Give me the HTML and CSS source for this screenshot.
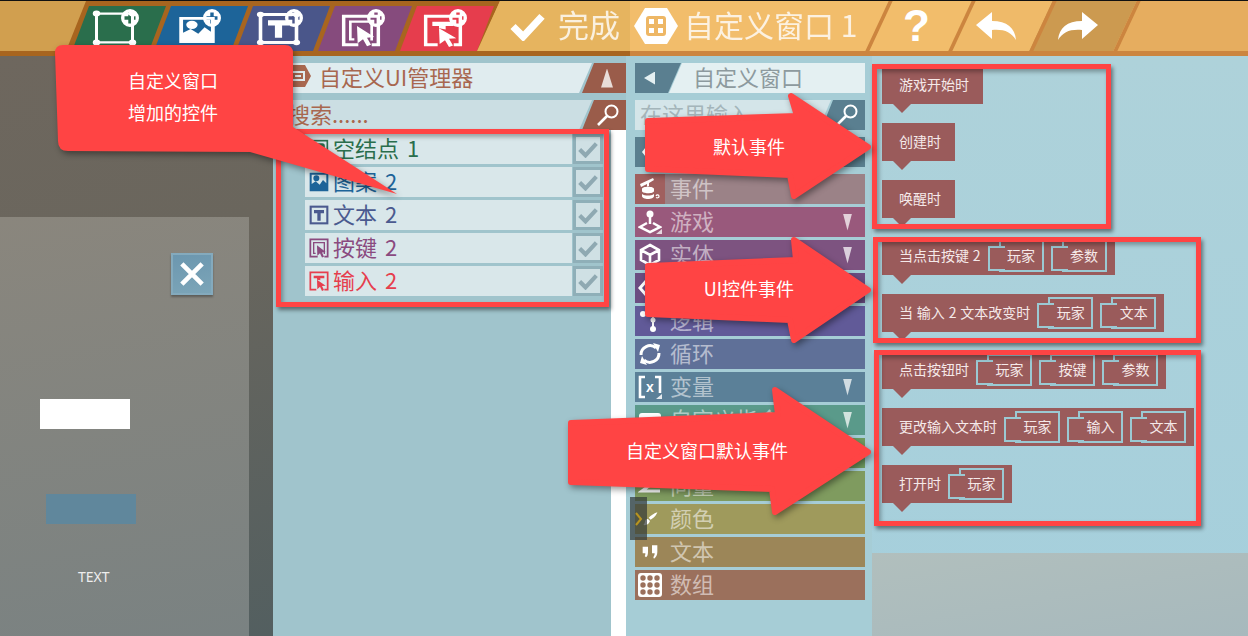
FILE: index.html
```html
<!DOCTYPE html>
<html lang="zh-CN">
<head>
    <meta charset="UTF-8">
    <meta name="viewport" content="width=device-width, initial-scale=1.0">
    <title>自定义窗口</title>
    <link rel="stylesheet" href="styles.css">
</head>
<body>
    <svg class="defs" width="0" height="0">
        <symbol id="i-plus" viewBox="0 0 18 18">
            <path fill="#fff" fill-rule="evenodd" d="M9 0a9 9 0 1 0 0 18A9 9 0 0 0 9 0zM7.3 3.5h3.4v3.8h3.800v3.400h-3.800v3.800H7.300v-3.800H3.500V7.300h3.800z"/>
        </symbol>
        <symbol id="i-node" viewBox="0 0 30 30" preserveAspectRatio="none">
            <path fill="none" stroke="currentColor" stroke-width="2" d="M3 3h24v24H3z"/>
            <circle cx="3" cy="3" r="2.500" fill="currentColor"/><circle cx="27" cy="3" r="2.500" fill="currentColor"/>
            <circle cx="3" cy="27" r="2.500" fill="currentColor"/><circle cx="27" cy="27" r="2.500" fill="currentColor"/>
        </symbol>
        <symbol id="i-image" viewBox="0 0 30 30" preserveAspectRatio="none">
            <path fill="currentColor" fill-rule="evenodd" d="M1 1h28v28H1zM4 4v14l6-4 6 5 5-7 5 5V4zM11 5a4.500 4.500 0 1 0 0 9 4.500 4.500 0 0 0 0-9z"/>
        </symbol>
        <symbol id="i-text" viewBox="0 0 30 30" preserveAspectRatio="none">
            <path fill="none" stroke="currentColor" stroke-width="2.400" d="M3 3h24v24H3z"/>
            <path fill="currentColor" d="M8 8h14v4.500h-4.600V23h-4.800V12.500H8z"/>
            <circle cx="3" cy="3" r="2.400" fill="currentColor"/><circle cx="27" cy="3" r="2.400" fill="currentColor"/>
            <circle cx="3" cy="27" r="2.400" fill="currentColor"/><circle cx="27" cy="27" r="2.400" fill="currentColor"/>
        </symbol>
        <symbol id="i-button" viewBox="0 0 30 30" preserveAspectRatio="none">
            <path fill="none" stroke="currentColor" stroke-width="2.600" d="M13 28H2V2h26v26h-5"/>
            <path fill="none" stroke="currentColor" stroke-width="2" d="M10 23H7V7h16v16h-1"/>
            <path fill="currentColor" d="M12 11l13 10-5.500.6 3 6.400-3 1.400-3-6.500-4 3.600z"/>
        </symbol>
        <symbol id="i-input" viewBox="0 0 30 30" preserveAspectRatio="none">
            <path fill="none" stroke="currentColor" stroke-width="2.600" d="M11 28H2V2h26v26h-5"/>
            <path fill="currentColor" d="M7 7h16v4h-6v3l-5-1v-2H7z"/>
            <path fill="currentColor" d="M12 13l13 9-5.500.6 3 6-3 1.400-3-6.200-4 3.400z"/>
        </symbol>
        <symbol id="i-lens" viewBox="0 0 24 24">
            <circle cx="15.500" cy="8.500" r="6" fill="none" stroke="currentColor" stroke-width="2"/>
            <path fill="none" stroke="currentColor" stroke-width="2.600" d="M11 13L2 22"/>
        </symbol>
        <symbol id="i-check" viewBox="0 0 24 20">
            <path fill="none" stroke="currentColor" stroke-width="5" d="M2 10l7 7L22 3"/>
        </symbol>
        <symbol id="i-redo" viewBox="0 0 40 28">
            <path fill="currentColor" d="M24 0l16 13-16 14v-9C12 17 5 20 0 28 1 16 9 9 24 9z"/>
        </symbol>
    </svg>

    <header class="topbar">
        <div class="topbar-row">
            <div class="topbar-fill"></div>
            <div class="tabs">
                <div class="tab tab-node">
                    <svg class="tab-icon"><use href="#i-node" x="0" y="1" width="45" height="36"/><use href="#i-plus" x="29" y="0" width="18" height="18"/></svg>
                </div>
                <div class="tab tab-image">
                    <svg class="tab-icon"><use href="#i-image" x="4" y="7" width="38" height="28"/><use href="#i-plus" x="29" y="0" width="18" height="18"/></svg>
                </div>
                <div class="tab tab-text">
                    <svg class="tab-icon"><use href="#i-text" x="0" y="2" width="45" height="35"/><use href="#i-plus" x="29" y="0" width="18" height="18"/></svg>
                </div>
                <div class="tab tab-button">
                    <svg class="tab-icon"><use href="#i-button" x="3" y="5" width="40" height="33"/><use href="#i-plus" x="29" y="0" width="18" height="18"/></svg>
                </div>
                <div class="tab tab-input">
                    <svg class="tab-icon"><use href="#i-input" x="3" y="5" width="40" height="33"/><use href="#i-plus" x="29" y="0" width="18" height="18"/></svg>
                </div>
            </div>
            <div class="done">
                <svg class="done-check" width="35" height="29"><use href="#i-check" width="35" height="29"/></svg>
                <span>完成</span>
            </div>
            <div class="doc-title">
                <svg class="doc-icon" width="44" height="36" viewBox="0 0 44 36">
                    <path fill="#fff" d="M11 0h22l11 18-11 18H11L0 18z"/>
                    <rect x="12" y="8" width="20" height="20" rx="3" fill="#eeb765"/>
                    <path fill="#fff" d="M15 11h5v5h-5zM24 11h5v5h-5zM15 20h5v5h-5zM24 20h5v5h-5z"/>
                </svg>
                <span>自定义窗口 1</span>
            </div>
            <div class="seg seg-help"><div class="seg-in help-mark">?</div></div>
            <div class="seg seg-undo">
                <div class="seg-in"><svg class="flip" width="40" height="28"><use href="#i-redo" width="40" height="28"/></svg></div>
            </div>
            <div class="seg seg-redo">
                <div class="seg-in"><svg width="40" height="28"><use href="#i-redo" width="40" height="28"/></svg></div>
            </div>
            <div class="seg seg-rest"></div>
        </div>
        <div class="topbar-rule"></div>
    </header>

    <main class="main">
        <section class="canvas">
            <div class="window">
                <div class="win-close">
                    <svg width="24" height="24" viewBox="0 0 26 26"><path stroke="#fff" stroke-width="5" d="M2 2l22 22M24 2L2 24"/></svg>
                </div>
                <div class="win-input"></div>
                <div class="win-button"></div>
                <div class="win-label">TEXT</div>
            </div>
        </section>

        <section class="manager">
            <div class="head">
                <div class="head-bar">
                    <svg width="26" height="22" viewBox="0 0 26 22"><path fill="#a8674f" d="M6 0h14l6 11-6 11H6L0 11z"/><path fill="none" stroke="#e0ecef" stroke-width="2" d="M7 7h12v8H7z"/><path stroke="#e0ecef" stroke-width="2" d="M10 11h6"/></svg>
                    <span>自定义UI管理器</span>
                </div>
                <div class="head-btn">
                    <div class="up-mark"></div>
                </div>
            </div>
            <div class="head">
                <div class="head-bar search-bar">搜索......</div>
                <div class="head-btn">
                    <svg class="lens" width="24" height="24"><use href="#i-lens" width="24" height="24"/></svg>
                </div>
            </div>
            <div class="list-wrap">
                <div class="list">
                    <div class="row">
                        <div class="row-bar c-node"><svg viewBox="0 0 24 24"><rect x="2" y="2" width="20" height="20" fill="none" stroke="currentColor" stroke-width="2"/><rect x="5" y="5" width="14" height="14" rx="3" fill="currentColor"/></svg><span>空结点 1</span></div>
                        <div class="tick"><svg width="20" height="17"><use href="#i-check" width="20" height="17"/></svg></div>
                    </div>
                    <div class="row">
                        <div class="row-bar c-image"><svg viewBox="0 0 24 24"><use href="#i-image" width="24" height="24"/></svg><span>图案 2</span></div>
                        <div class="tick"><svg width="20" height="17"><use href="#i-check" width="20" height="17"/></svg></div>
                    </div>
                    <div class="row">
                        <div class="row-bar c-text"><svg viewBox="0 0 24 24"><rect x="2" y="2" width="20" height="20" fill="none" stroke="currentColor" stroke-width="2.500"/><path fill="currentColor" d="M6 6h12v4h-4v9h-4v-9H6z"/></svg><span>文本 2</span></div>
                        <div class="tick"><svg width="20" height="17"><use href="#i-check" width="20" height="17"/></svg></div>
                    </div>
                    <div class="row">
                        <div class="row-bar c-button"><svg viewBox="0 0 24 24"><use href="#i-button" width="24" height="24"/></svg><span>按键 2</span></div>
                        <div class="tick"><svg width="20" height="17"><use href="#i-check" width="20" height="17"/></svg></div>
                    </div>
                    <div class="row">
                        <div class="row-bar c-input"><svg viewBox="0 0 24 24"><use href="#i-input" width="24" height="24"/></svg><span>输入 2</span></div>
                        <div class="tick"><svg width="20" height="17"><use href="#i-check" width="20" height="17"/></svg></div>
                    </div>
                </div>
                <div class="gutter"></div>
            </div>
        </section>

        <section class="palette">
            <div class="head head-pal">
                <div class="back-btn"><div class="back-mark"></div></div>
                <div class="head-bar pal-title">自定义窗口</div>
            </div>
            <div class="head head-pal">
                <div class="head-bar pal-search">在这里输入</div>
                <div class="head-btn pal-lens">
                    <svg class="lens" width="24" height="24"><use href="#i-lens" width="24" height="24"/></svg>
                </div>
            </div>
            <div class="pal-tab">
                <svg width="14" height="20" viewBox="0 0 14 20"><path fill="#fff" d="M8 1l5 9-5 9-7-9z"/></svg>
            </div>
            <div class="pal-list">
                <div class="pal-row pal-event">
                    <div class="pal-icon pal-icon-on">
                        <svg width="24" height="24" viewBox="0 0 24 24"><path fill="#fff" d="M2 7l13-6 1 2L11 6v3l-2 .5V7L3 10zM4 12c0-3 12-3 12 0v2c0 3-12 3-12 0zM4 17c3 2 9 2 12 0v2c0 4-12 4-12 0z"/><path fill="none" stroke="#fff" stroke-width="1.200" d="M18 19c1-2 3-1 3 .5s-2 1.500-3 1"/></svg>
                    </div>
                    <span>事件</span>
                </div>
                <div class="pal-row pal-game">
                    <div class="pal-icon">
                        <svg width="24" height="24" viewBox="0 0 24 24"><circle cx="12" cy="4" r="3.500" fill="#fff"/><path stroke="#fff" stroke-width="2.500" d="M12 6v8"/><path fill="none" stroke="#fff" stroke-width="2.500" d="M9 13L2 17l10 5 10-5-7-4"/><path fill="#e6d8e0" d="M24 19v5h-6z"/></svg>
                    </div>
                    <span>游戏</span><i class="more"></i>
                </div>
                <div class="pal-row pal-entity">
                    <div class="pal-icon">
                        <svg width="24" height="24" viewBox="0 0 24 24"><path fill="none" stroke="#fff" stroke-width="2.600" d="M12 2l9 5v10l-9 5-9-5V7zM3 7l9 5 9-5M12 12v10"/></svg>
                    </div>
                    <span>实体</span><i class="more"></i>
                </div>
                <div class="pal-row pal-func">
                    <div class="pal-icon">
                        <svg width="24" height="24" viewBox="0 0 24 24"><path fill="none" stroke="#fff" stroke-width="3" d="M9 4l-7 8 7 8M15 4l7 8-7 8"/></svg>
                    </div>
                </div>
                <div class="pal-row pal-logic">
                    <div class="pal-icon">
                        <svg width="24" height="24" viewBox="0 0 24 24"><path fill="none" stroke="#fff" stroke-width="2" d="M5 5h7c2 0 3 1 3 3v11"/><circle cx="5" cy="5" r="3" fill="#fff"/><circle cx="15" cy="11" r="2.500" fill="#fff"/><circle cx="15" cy="20" r="3" fill="#fff"/></svg>
                    </div>
                    <span>逻辑</span>
                </div>
                <div class="pal-row pal-loop">
                    <div class="pal-icon">
                        <svg width="24" height="24" viewBox="0 0 24 24"><path fill="none" stroke="#fff" stroke-width="3" d="M3 13a9 9 0 0 1 15-7M21 11a9 9 0 0 1-15 7"/><path fill="#fff" d="M15 1l7 2-2 7zM9 23l-7-2 2-7z"/></svg>
                    </div>
                    <span>循环</span>
                </div>
                <div class="pal-row pal-var">
                    <div class="pal-icon">
                        <svg width="24" height="24" viewBox="0 0 24 24"><path fill="none" stroke="#fff" stroke-width="2.600" d="M7 2H2v20h5M17 2h5v16"/><text class="var-x" x="12" y="17" text-anchor="middle">x</text><path fill="#e4eaee" d="M24 19v5h-6z"/></svg>
                    </div>
                    <span>变量</span><i class="more"></i>
                </div>
                <div class="pal-row pal-custom">
                    <div class="pal-icon">
                        <svg width="24" height="24" viewBox="0 0 24 24"><rect x="1" y="5" width="22" height="14" rx="3" fill="#fff"/></svg>
                    </div>
                    <span>自定义指令</span><i class="more"></i>
                </div>
                <div class="pal-row pal-math">
                    <div class="pal-icon"></div>
                </div>
                <div class="pal-row pal-vector">
                    <div class="pal-icon">
                        <svg width="24" height="24" viewBox="0 0 24 24"><path fill="none" stroke="#fff" stroke-width="3" d="M19 6L4 17h18"/></svg>
                    </div>
                    <span>向量</span>
                </div>
                <div class="pal-row pal-color">
                    <div class="pal-icon">
                        <svg width="18" height="16" viewBox="0 0 24 24"><path fill="#fff" d="M23 2c-1 4-6 9-10 11l-3-3c3-3 9-7 13-8zM9 12l3 3c-1 4-5 7-10 6 3-2 2-5 3-7s3-2 4-2z"/></svg>
                    </div>
                    <span>颜色</span>
                </div>
                <div class="pal-row pal-str">
                    <div class="pal-icon">
                        <svg width="16" height="16" viewBox="0 0 24 24"><path fill="#fff" d="M1 4h8v8c0 4-1 7-3 8l-2-2c1-1 1-2 1-4H1zM15 2h8v10c0 5-2 8-5 10l-1-2c1-2 2-3 2-6h-4z"/></svg>
                    </div>
                    <span>文本</span>
                </div>
                <div class="pal-row pal-array">
                    <div class="pal-icon">
                        <svg width="24" height="24" viewBox="0 0 24 24"><rect width="24" height="24" rx="3" fill="#fff"/><g fill="#9b705c"><circle cx="5" cy="5" r="2.700"/><circle cx="12" cy="5" r="2.700"/><circle cx="19" cy="5" r="2.700"/><circle cx="5" cy="12" r="2.700"/><circle cx="12" cy="12" r="2.700"/><circle cx="19" cy="12" r="2.700"/><circle cx="5" cy="19" r="2.700"/><circle cx="12" cy="19" r="2.700"/><circle cx="19" cy="19" r="2.700"/></g></svg>
                    </div>
                    <span>数组</span>
                </div>
            </div>
        </section>

        <section class="events">
            <div class="blocks">
                <div class="block"><span>游戏开始时</span></div>
                <div class="block"><span>创建时</span></div>
                <div class="block"><span>唤醒时</span></div>
                <div class="block"><span>当点击按键 2</span><div class="chip">玩家</div><div class="chip">参数</div></div>
                <div class="block"><span>当 输入 2 文本改变时</span><div class="chip">玩家</div><div class="chip">文本</div></div>
                <div class="block"><span>点击按钮时</span><div class="chip">玩家</div><div class="chip">按键</div><div class="chip">参数</div></div>
                <div class="block"><span>更改输入文本时</span><div class="chip">玩家</div><div class="chip">输入</div><div class="chip">文本</div></div>
                <div class="block"><span>打开时</span><div class="chip">玩家</div></div>
            </div>
            <div class="preview"></div>
        </section>
    </main>

    <!-- annotations drawn on top of the screenshot -->
    <div class="frame frame-list"></div>
    <div class="frame frame-default"></div>
    <div class="frame frame-ui"></div>
    <div class="frame frame-window"></div>
    <div class="handle"><svg width="8" height="14" viewBox="0 0 8 14"><path fill="none" stroke="#b8941f" stroke-width="2" d="M1 1l5 6-5 6"/></svg></div>

    <svg class="notes" width="1248" height="636">
        <path class="note" d="M63 45H285Q293 45 293 53V127L397 194 250 152 68 151Q58 151 58 141L55 53Q55 45 63 45Z"/>
        <path class="note note-arrow" d="M648 121L797 116 791 96 868 147 794 196 790 175 648 169Z"/>
        <path class="note note-arrow" d="M648 266L796 260 794 240 868 290 794 340 790 320 648 314Z"/>
        <path class="note note-arrow" d="M571 423L778 415 775 390 868 452 775 512 772 489 571 482Z"/>
        <text class="note-text" x="173" y="88">自定义窗口</text>
        <text class="note-text" x="173" y="120">增加的控件</text>
        <text class="note-text" x="749" y="154">默认事件</text>
        <text class="note-text" x="749" y="296">UI控件事件</text>
        <text class="note-text" x="707" y="458">自定义窗口默认事件</text>
    </svg>
</body>
</html>
```

FILE: styles.css
```css
* { box-sizing: border-box; }
html, body { margin: 0; padding: 0; }
body { position: relative; width: 1248px; height: 636px; overflow: hidden; font-family: "Noto Sans CJK SC", "Noto Sans", sans-serif; background: #a6cdd6; }
.defs { position: absolute; }
svg { display: block; }

/* top toolbar */
.topbar { border-top: 1px solid #111; }
.topbar-row { display: flex; height: 50px; overflow: hidden; background: #e6ad5f; }
.topbar-rule { height: 5px; background: linear-gradient(90deg, #a8651f 630px, #cc853f 630px); }
.topbar-fill { width: 90px; flex: none; background: #d19f4f; }
.tabs { display: flex; flex: none; width: 434px; margin-left: -24px; padding: 5px 0 0 6px; background: #a8651f; clip-path: polygon(20px 0, 100% 0, calc(100% - 22px) 100%, 0 100%); }
.tab { width: 94px; flex: none; padding: 3px 0 0 20px; margin-right: -12px; color: #fff; clip-path: polygon(17px 0, 100% 0, calc(100% - 17px) 100%, 0 100%); }
.tab-icon { width: 47px; height: 38px; }
.tab-node { background: #2a6e4c; }
.tab-image { background: #1d6499; }
.tab-text { background: #4a568a; }
.tab-button { background: #864b7d; }
.tab-input { background: #e63d4d; }
.done { display: flex; align-items: center; flex: none; width: 153px; margin-left: -23px; padding-left: 33px; background: #e6b45f; color: #fff; clip-path: polygon(23px 0, 100% 0, 100% 100%, 0 100%); }
.done span { margin: 0 0 4px 13px; font-size: 31px; line-height: 40px; opacity: .8; }
.done-check { color: #fff; }
.doc-title { display: flex; align-items: center; flex: none; width: 265px; margin-right: -18px; padding-left: 4px; background: #f2bd6b; color: #fff; }
.doc-title span { margin: 0 0 4px 6px; font-size: 30px; line-height: 40px; opacity: .8; white-space: nowrap; }
.seg { display: flex; align-items: center; justify-content: center; flex: none; height: 50px; border-left: 4px solid #cc853f; transform: skewX(-25deg); color: #fff; }
.seg-in { transform: skewX(25deg); }
.seg-help { width: 83px; padding-right: 8px; background: #f2bd6b; }
.seg-undo { width: 81px; padding-right: 14px; background: #efba69; }
.seg-redo { width: 84px; padding-right: 14px; background: #cc9a50; }
.seg-rest { flex: 1; min-width: 140px; background: #e6ad5f; }
.help-mark { font-family: "Liberation Sans", sans-serif; font-size: 44px; font-weight: bold; line-height: 1; }
.flip { transform: scaleX(-1); }

/* page columns */
.main { display: flex; height: 580px; }

/* game canvas */
.canvas { flex: none; width: 273px; padding-top: 161px; background: linear-gradient(165deg, #6e675e, #6a665d 35%, #535f60); }
.window { position: relative; width: 249px; height: 419px; background: linear-gradient(170deg, #8a867d, #7a8282); }
.win-close { position: absolute; left: 171px; top: 36px; display: flex; align-items: center; justify-content: center; width: 42px; height: 42px; background: linear-gradient(170deg, #6c97af, #7ca5b8); border: 2px solid #84aabd; box-shadow: 0 2px 2px rgba(0,0,0,.3); }
.win-input { position: absolute; left: 40px; top: 182px; width: 90px; height: 30px; background: #fff; }
.win-button { position: absolute; left: 46px; top: 277px; width: 90px; height: 30px; background: #60879c; }
.win-label { position: absolute; left: 78px; top: 350px; color: #eee; font-family: "Noto Sans", sans-serif; font-size: 14px; line-height: 20px; }

/* shared title and search rows */
.head { display: flex; height: 30px; margin-bottom: 7px; }
.head-bar { display: flex; align-items: center; gap: 8px; width: 312px; flex: none; padding: 0 0 5px 5px; font-size: 22px; color: #a8674f; background: #e0ecef; clip-path: polygon(0 0, 100% 0, calc(100% - 13px) 100%, 0 100%); white-space: nowrap; }
.head-btn { display: flex; align-items: center; justify-content: center; width: 44px; flex: none; margin-left: -10px; background: #9a5c4a; color: #fff; clip-path: polygon(12px 0, 100% 0, 100% 100%, 0 100%); }
.up-mark { width: 12px; height: 19px; margin-left: 6px; background: #e8ddd8; clip-path: polygon(50% 0, 100% 100%, 0 100%); }
.search-bar { padding-left: 8px; background: #cbdee3; }
.lens { margin-left: 8px; }

/* manager column */
.manager { flex: none; width: 353px; padding: 7px 0 0 7px; background: #a0c4cc; }
.list-wrap { display: flex; height: 506px; margin-top: -7px; }
.list { flex: 1; display: flex; flex-direction: column; gap: 3px; padding: 4px 8px 0 25px; }
.gutter { flex: none; width: 15px; background: #fff; }
.row { display: flex; height: 30px; gap: 1px; }
.row-bar { display: flex; align-items: center; flex: 1; padding-left: 4px; background: #d9e7ea; font-size: 22px; line-height: 30px; }
.row-bar svg { flex: none; width: 20px; height: 20px; margin-right: 4px; }
.row-bar span { margin-bottom: 4px; word-spacing: 3px; }
.tick { display: flex; align-items: center; justify-content: center; flex: none; width: 30px; background: #cfe0e4; border: 3px solid #8fafb8; color: #8fa9b2; }
.c-node { color: #2a6e4c; }
.c-image { color: #1d6499; }
.c-text { color: #4b5a8f; }
.c-button { color: #8a4a7f; }
.c-input { color: #e63e4d; }

/* block palette */
.palette { flex: none; width: 246px; padding: 7px 7px 0 9px; }
.head-pal .head-bar { width: auto; flex: 1; }
.back-btn { display: flex; align-items: center; width: 46px; flex: none; padding-left: 9px; background: #5a7f90; clip-path: polygon(0 0, 100% 0, calc(100% - 13px) 100%, 0 100%); }
.back-mark { width: 11px; height: 13px; background: #e4f0f2; clip-path: polygon(100% 0, 100% 100%, 0 50%); }
.pal-title { margin-left: -12px; padding-left: 24px; color: #8d9a9e; background: #e4f0f2; clip-path: polygon(13px 0, 100% 0, 100% 100%, 0 100%); }
.pal-search { padding-left: 5px; color: #a4b5ba; background: #d4e5e9; }
.pal-lens { background: #5a7f90; }
.pal-tab { display: flex; align-items: center; height: 30px; margin-bottom: 7px; padding-left: 6px; background: #5a7f8f; }
.pal-list { display: flex; flex-direction: column; gap: 3px; }
.pal-row { display: flex; align-items: center; height: 30px; font-size: 22px; line-height: 30px; color: rgba(255,255,255,.55); }
.pal-row span { margin: 0 0 4px 5px; }
.pal-icon { display: flex; align-items: center; justify-content: center; flex: none; width: 30px; height: 30px; }
.pal-icon-on { background: #a0605f; }
.more { width: 9px; height: 17px; margin-left: auto; margin-right: 13px; background: rgba(255,255,255,.72); clip-path: polygon(0 0, 100% 0, 50% 100%); }
.var-x { font-family: "Liberation Sans", sans-serif; font-size: 14px; font-weight: bold; fill: #fff; }
.pal-event { background: #9b8287; }
.pal-game { background: #99597c; }
.pal-entity { background: #7d5380; }
.pal-func { background: #6b4d82; }
.pal-logic { background: #615a98; }
.pal-loop { background: #5f7098; }
.pal-var { background: #5b8098; }
.pal-custom { background: #5a9a8a; }
.pal-math { background: #6e9b60; }
.pal-vector { background: #7f9b5f; }
.pal-color { background: #9f9a5c; }
.pal-str { background: #9c8658; }
.pal-array { background: #9b705c; }

/* event blocks */
.events { display: flex; flex-direction: column; flex: 1; background: linear-gradient(180deg, #aed2da, #a5cfdc); }
.blocks { display: flex; flex-direction: column; align-items: flex-start; gap: 19px; flex: 1; padding: 10px 0 0 10px; }
.block { position: relative; display: flex; align-items: center; gap: 7px; height: 38px; padding: 0 8px 0 17px; background: #9a5b5b; color: #f5e9e9; font-size: 14px; white-space: nowrap; }
.block > span { margin-bottom: 2px; word-spacing: .7px; }
.block > span:only-child { margin-right: 6px; }
.block::after { content: ""; position: absolute; left: 11px; top: 100%; width: 18px; height: 9px; background: #9a5b5b; clip-path: polygon(0 0, 100% 0, 50% 100%); }
.chip { position: relative; width: 45px; height: 32px; margin-left: 11px; border: 2px solid #9bc9d3; text-align: center; line-height: 26px; }
.chip::before { content: ""; position: absolute; left: -13px; top: 4px; width: 15px; height: 21px; background: #9a5b5b; border: 2px solid #9bc9d3; border-right: 0; }
.preview { flex: none; height: 83px; background: linear-gradient(170deg, #b1bfbd, #a7b9bd); }

/* annotations */
.frame { position: absolute; border: 5px solid #ff4444; box-shadow: 2px 3px 4px rgba(0,0,0,.45), inset 2px 3px 4px rgba(0,0,0,.3); }
.frame-list { left: 276px; top: 129px; width: 333px; height: 178px; }
.frame-default { left: 872px; top: 64px; width: 239px; height: 165px; }
.frame-ui { left: 873px; top: 237px; width: 328px; height: 106px; }
.frame-window { left: 874px; top: 350px; width: 327px; height: 176px; }
.handle { position: absolute; left: 630px; top: 497px; display: flex; align-items: center; justify-content: center; width: 17px; height: 43px; background: rgba(50,55,55,.7); }
.notes { position: absolute; left: 0; top: 0; }
.note { fill: #ff4444; filter: drop-shadow(2px 3px 3px rgba(0,0,0,.4)); }
.note-arrow { stroke: #ff4444; stroke-width: 6; stroke-linejoin: round; }
.note-text { fill: #fff; font-size: 18px; text-anchor: middle; }
```
